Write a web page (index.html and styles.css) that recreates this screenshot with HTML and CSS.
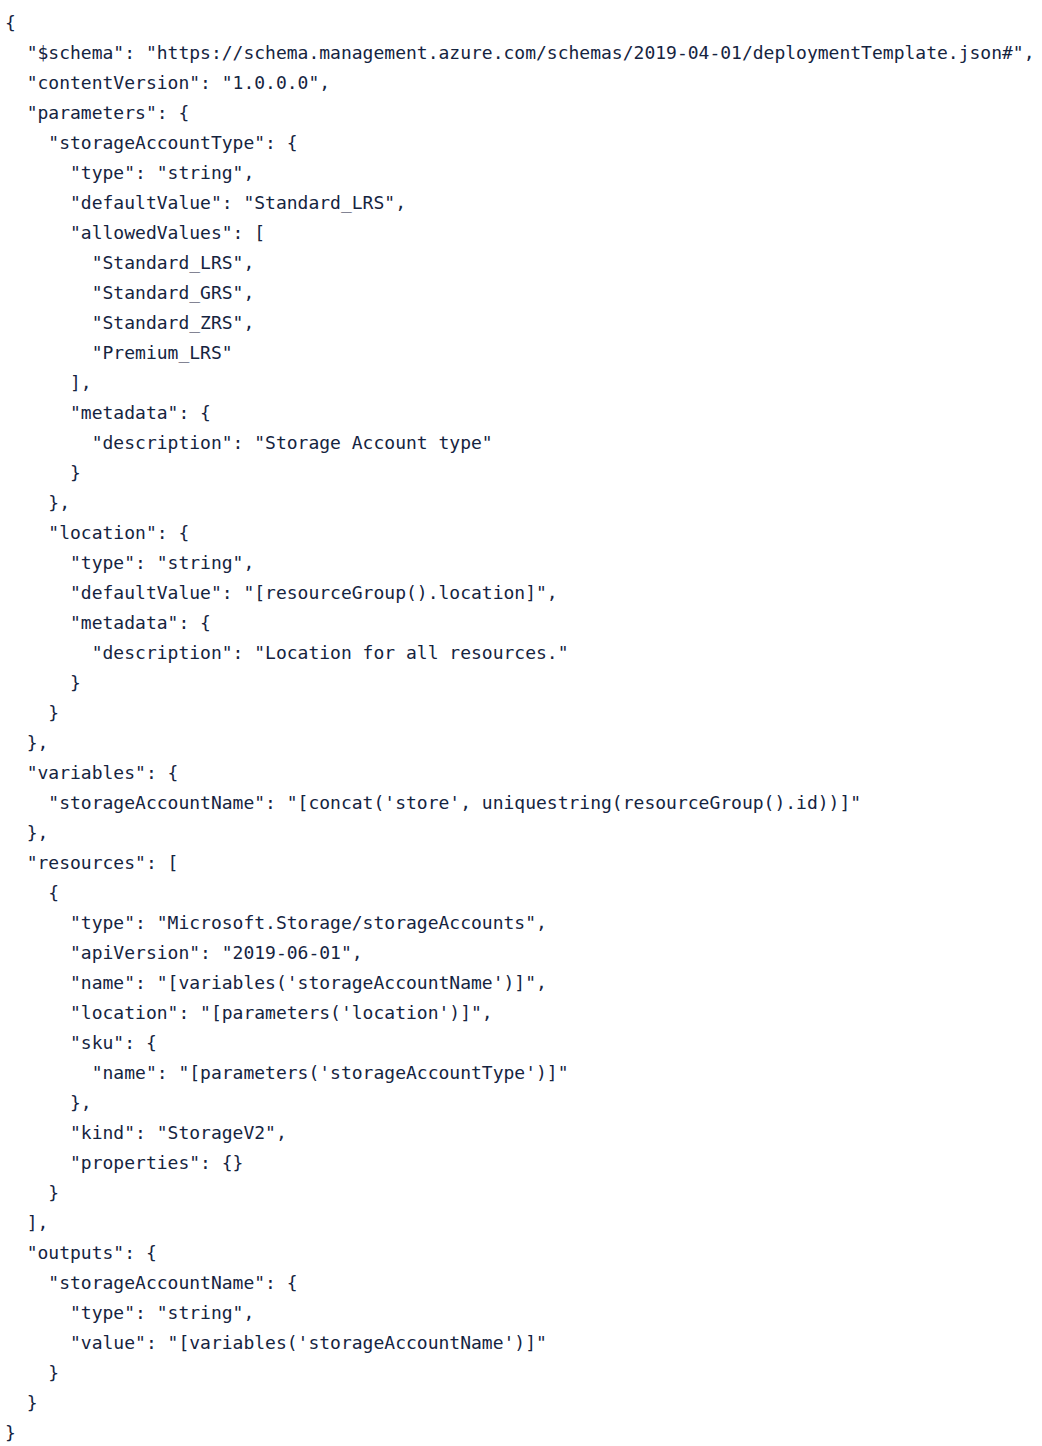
FILE: index.html
```html
<!DOCTYPE html>
<html>
<head>
<meta charset="utf-8">
<link rel="stylesheet" href="styles.css">
</head>
<body>
<pre class="code">{
  "$schema": "https://schema.management.azure.com/schemas/2019-04-01/deploymentTemplate.json#",
  "contentVersion": "1.0.0.0",
  "parameters": {
    "storageAccountType": {
      "type": "string",
      "defaultValue": "Standard_LRS",
      "allowedValues": [
        "Standard_LRS",
        "Standard_GRS",
        "Standard_ZRS",
        "Premium_LRS"
      ],
      "metadata": {
        "description": "Storage Account type"
      }
    },
    "location": {
      "type": "string",
      "defaultValue": "[resourceGroup().location]",
      "metadata": {
        "description": "Location for all resources."
      }
    }
  },
  "variables": {
    "storageAccountName": "[concat('store', uniquestring(resourceGroup().id))]"
  },
  "resources": [
    {
      "type": "Microsoft.Storage/storageAccounts",
      "apiVersion": "2019-06-01",
      "name": "[variables('storageAccountName')]",
      "location": "[parameters('location')]",
      "sku": {
        "name": "[parameters('storageAccountType')]"
      },
      "kind": "StorageV2",
      "properties": {}
    }
  ],
  "outputs": {
    "storageAccountName": {
      "type": "string",
      "value": "[variables('storageAccountName')]"
    }
  }
}</pre>
</body>
</html>
```
FILE: styles.css
```css
html, body {
  margin: 0;
  padding: 0;
  background: #ffffff;
}
.code {
  margin: 0;
  padding: 8px 5px 0;
  font-family: "DejaVu Sans Mono", "Liberation Mono", monospace;
  font-size: 18px;
  line-height: 30px;
  color: #15243f;
  white-space: pre;
}
```
